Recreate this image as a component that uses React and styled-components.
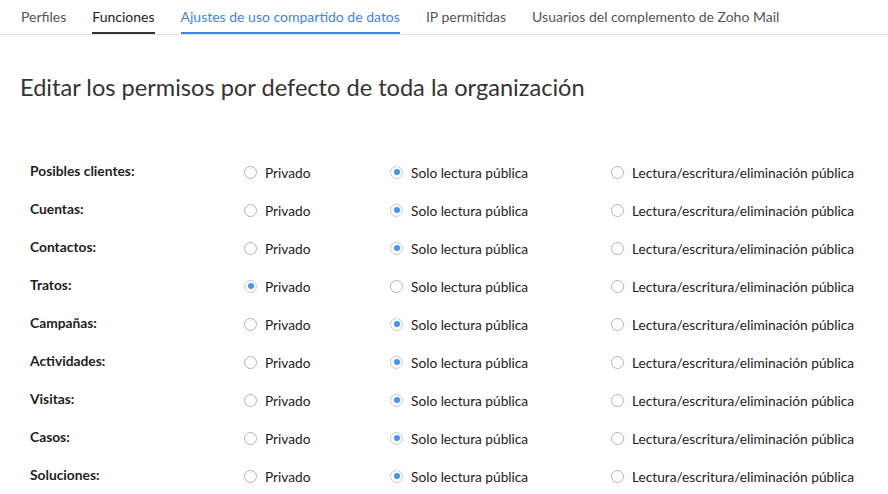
import React from 'react'
import styled, { createGlobalStyle } from 'styled-components'

const GlobalStyle = createGlobalStyle`
  body {
    margin: 0;
    background: #fff;
    font-family: Lato, "Open Sans", sans-serif;
    color: #222;
  }
`

const TABS = [
  { label: 'Perfiles' },
  { label: 'Funciones', state: 'hover' },
  { label: 'Ajustes de uso compartido de datos', state: 'active' },
  { label: 'IP permitidas' },
  { label: 'Usuarios del complemento de Zoho Mail' },
]

const OPTIONS = ['Privado', 'Solo lectura pública', 'Lectura/escritura/eliminación pública']

const MODULES = [
  { name: 'Posibles clientes:', value: 1 },
  { name: 'Cuentas:', value: 1 },
  { name: 'Contactos:', value: 1 },
  { name: 'Tratos:', value: 0 },
  { name: 'Campañas:', value: 1 },
  { name: 'Actividades:', value: 1 },
  { name: 'Visitas:', value: 1 },
  { name: 'Casos:', value: 1 },
  { name: 'Soluciones:', value: 1 },
]

const TabBar = styled.nav`
  display: flex;
  gap: 26px;
  height: 34px;
  padding-left: 21px;
  border-bottom: 1px solid #e4e4e4;
`

const Tab = styled.div`
  display: flex;
  align-items: center;
  height: 100%;
  box-sizing: border-box;
  font-size: 14px;
  color: ${({ $state }) => ($state === 'active' ? '#3d86e0' : $state === 'hover' ? '#222' : '#555')};
  border-bottom: 2px solid
    ${({ $state }) => ($state === 'active' ? '#3d86e0' : $state === 'hover' ? '#333' : 'transparent')};
  margin-bottom: -1px;
`

const Title = styled.h1`
  margin: 38px 0 0 20px;
  font-size: 23.6px;
  font-weight: 400;
  color: #333;
  line-height: 28px;
`

const Table = styled.div`
  margin-top: 52px;
  padding-left: 30px;
`

const Row = styled.div`
  display: grid;
  grid-template-columns: 214px 146px 221px 1fr;
  align-items: center;
  height: 38px;
`

const Label = styled.div`
  font-size: 13.8px;
  font-weight: 700;
  color: #1e1e1e;
  margin-top: -3px;
`

const Option = styled.label`
  display: flex;
  align-items: center;
  gap: 8px;
  font-size: 13.7px;
  color: #222;
  white-space: nowrap;
`

const Radio = styled.span`
  width: 11px;
  height: 11px;
  border-radius: 50%;
  border: 1px solid ${({ $checked }) => ($checked ? '#c8c8c8' : '#b2b2b2')};
  display: flex;
  align-items: center;
  justify-content: center;
  flex-shrink: 0;

  &::after {
    content: '';
    width: 6px;
    height: 6px;
    border-radius: 50%;
    background: ${({ $checked }) => ($checked ? '#3f97f6' : 'transparent')};
  }
`

export default function App() {
  return (
    <>
      <GlobalStyle />
      <TabBar>
        {TABS.map((t) => (
          <Tab key={t.label} $state={t.state}>{t.label}</Tab>
        ))}
      </TabBar>
      <Title>Editar los permisos por defecto de toda la organización</Title>
      <Table>
        {MODULES.map((m) => (
          <Row key={m.name}>
            <Label>{m.name}</Label>
            {OPTIONS.map((o, i) => (
              <Option key={o}>
                <Radio $checked={m.value === i} />
                {o}
              </Option>
            ))}
          </Row>
        ))}
      </Table>
    </>
  )
}
